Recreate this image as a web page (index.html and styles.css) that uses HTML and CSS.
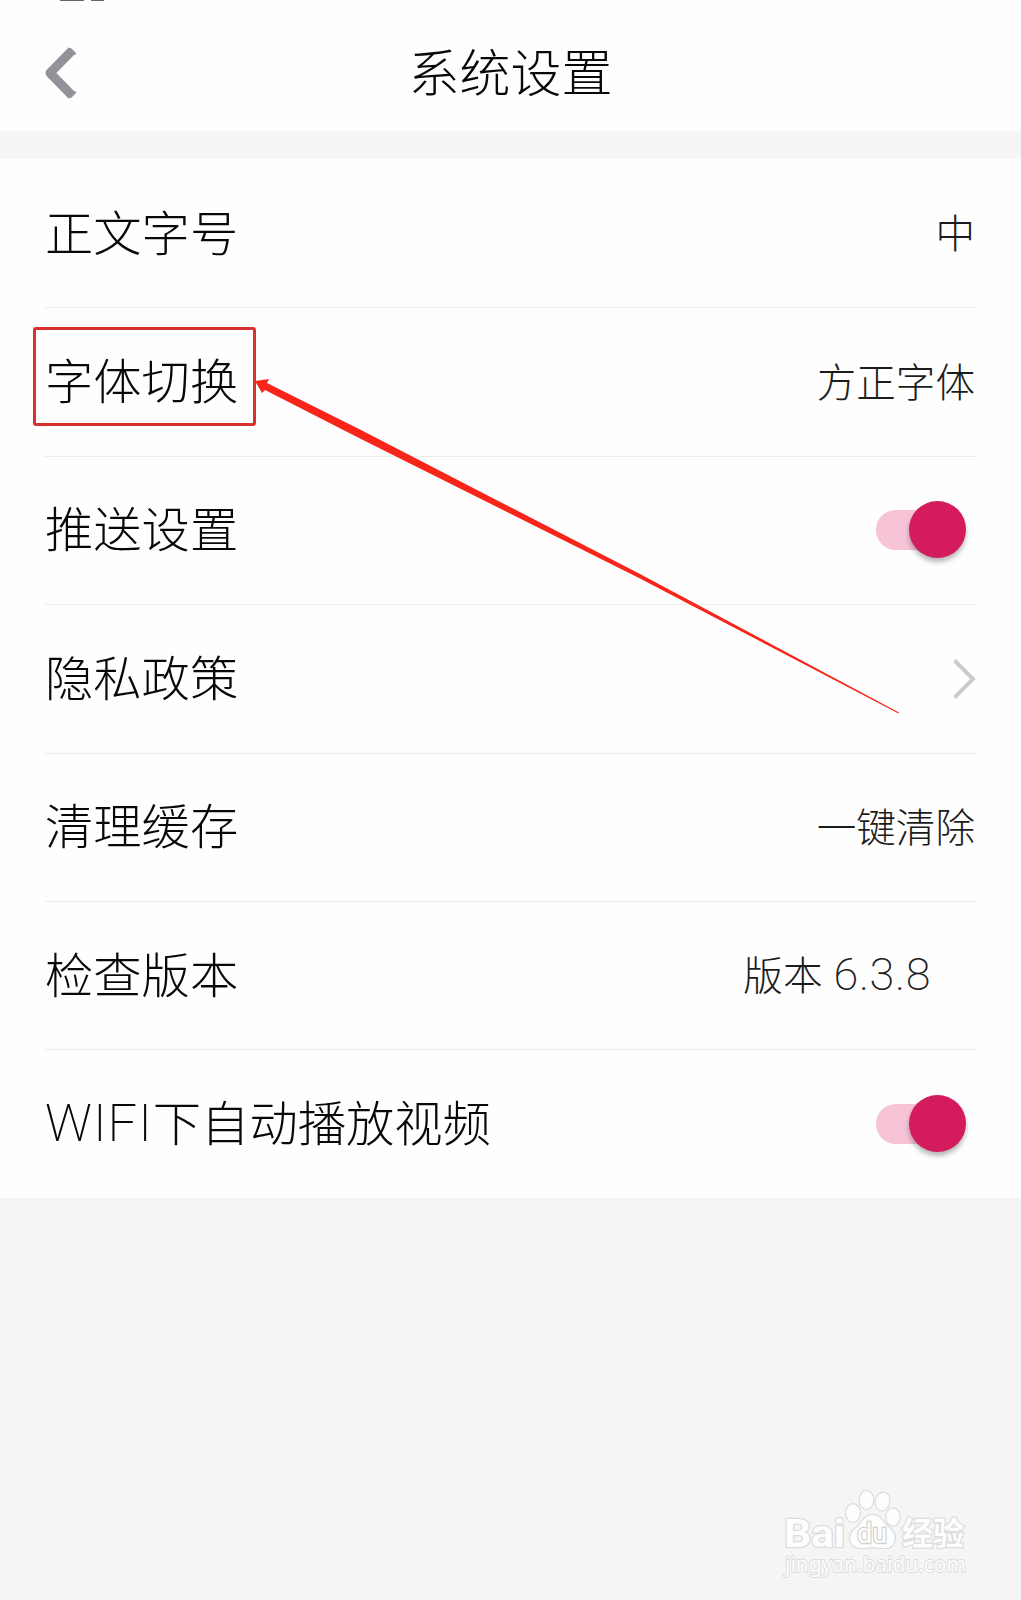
FILE: index.html
```html
<!DOCTYPE html>
<html lang="zh-CN">
<head>
<meta charset="utf-8">
<title>系统设置</title>
<link rel="stylesheet" href="styles.css">
</head>
<body>
<div class="screen">
  <div class="status"><i class="status-a"></i><i class="status-b"></i></div>
  <header class="header">
    <svg class="back" width="34" height="54" viewBox="0 0 34 54" fill="none" stroke="#919398" stroke-width="9" stroke-linejoin="round"><path d="M29 4.500 7 27 29 49.500" /><path stroke-width="3" d="M27.500 3.500 31.500 7.500M27.500 50.500 31.500 46.500" stroke-linecap="round"/></svg>
    <h1 class="title">系统设置</h1>
  </header>
  <main class="list">
    <div class="row"><span class="label">正文字号</span><span class="value">中</span></div>
    <div class="row"><span class="label marked">字体切换</span><span class="value">方正字体</span></div>
    <div class="row"><span class="label">推送设置</span><span class="switch"><i class="knob"></i></span></div>
    <div class="row"><span class="label">隐私政策</span>
      <svg class="chevron" width="23" height="40" viewBox="0 0 23 40" fill="none" stroke="#cbcbcb" stroke-width="4"><path d="M1.500 1.500 20 20 1.500 38.500"/></svg>
    </div>
    <div class="row"><span class="label">清理缓存</span><span class="value">一键清除</span></div>
    <div class="row"><span class="label">检查版本</span><span class="value version">版本<span class="digits">6.3.8</span></span></div>
    <div class="row"><span class="label"><span class="latin">WIFI</span>下自动播放视频</span><span class="switch"><i class="knob"></i></span></div>
  </main>
  <svg class="arrow" width="646" height="335" viewBox="254 379 646 335"><path fill="#f8261a" d="M255 381 269 379 267 383 360 429.500 640 574 899 712.500 898.500 713.500 640 578.500 360 438.500 265 390 262 393Z"/></svg>
  <svg class="watermark" width="190" height="94" viewBox="780 1486 190 94">
    <g fill="#fdfdfd" stroke="#dcdcdc" stroke-width="2.400" paint-order="stroke">
      <ellipse cx="853" cy="1513" rx="6.800" ry="8.700"/>
      <ellipse cx="866.500" cy="1500" rx="6.800" ry="8.900"/>
      <ellipse cx="882.500" cy="1501.500" rx="6.800" ry="8.900" transform="rotate(12 882.500 1501.500)"/>
      <ellipse cx="893" cy="1517" rx="6.700" ry="8.500"/>
      <path d="M873 1515c-9 0-11 8-17 13-5 4-7 9-5 14 3 8 12 6 22 5 10 1 18 3 21-5 2-5 0-10-5-14-6-5-8-13-16-13Z"/>
      <text class="wm-baidu" x="784" y="1547" textLength="61" lengthAdjust="spacingAndGlyphs">Bai</text>
      <text class="wm-du" x="857" y="1543" textLength="30" lengthAdjust="spacingAndGlyphs">du</text>
      <text class="wm-cn" x="902" y="1545" textLength="62" lengthAdjust="spacingAndGlyphs">经验</text>
      <text class="wm-url" x="785" y="1571.500" textLength="181" lengthAdjust="spacingAndGlyphs">jingyan.baidu.com</text>
    </g>
  </svg>
</div>
</body>
</html>
```
FILE: styles.css
```css
* { box-sizing: border-box; }
body {
  margin: 0;
  background: #f5f5f5;
  font-family: "Noto Sans CJK SC", "Noto Sans", sans-serif;
  font-weight: 300;
  color: #080808;
}
.screen { position: relative; height: 1600px; overflow: hidden; }
.status {
  height: 14px;
  padding-left: 60px;
  display: flex;
  gap: 7px;
  background: #fefefe;
}
.status i { height: 1px; background: #666; }
.status-a { width: 24px; }
.status-b { width: 13px; }
.header {
  display: grid;
  grid-template-columns: 120px 1fr 120px;
  align-items: center;
  height: 117px;
  background: #fefefe;
}
.back { margin-left: 43px; }
.title {
  margin: 0;
  padding-bottom: 5px;
  text-align: center;
  font-size: 51px;
  font-weight: 300;
  line-height: 60px;
}
.list { margin-top: 28px; padding-top: 1px; background: #fefefe; }
.row {
  display: flex;
  align-items: center;
  justify-content: space-between;
  height: 148.4px;
  margin: 0 45px;
  border-bottom: 1px solid #ededed;
}
.row:last-child { height: 148px; border-bottom: 0; }
.label {
  position: relative;
  padding-bottom: 8px;
  font-size: 48.3px;
  line-height: 60px;
  white-space: nowrap;
}
.marked::after {
  content: "";
  position: absolute;
  box-sizing: border-box;
  left: -12px;
  top: -21px;
  width: 223px;
  height: 99px;
  border: 3px solid #d93030;
  border-radius: 3px;
}
.value {
  margin-right: 1px;
  padding-bottom: 5px;
  font-size: 39.6px;
  line-height: 50px;
  color: #1c1c1c;
}
.version { margin-right: 45px; }
.latin {
  font-family: Roboto, sans-serif;
  font-size: 52px;
  font-weight: 200;
  line-height: 1;
  letter-spacing: 1px;
}
.digits {
  margin-left: 11px;
  font-family: Roboto, sans-serif;
  font-size: 45px;
  font-weight: 200;
  line-height: 1;
  letter-spacing: .6px;
}
.switch {
  position: relative;
  width: 80px;
  height: 40px;
  margin-right: 20px;
  border-radius: 20px;
  background: #f6c3d7;
}
.knob {
  position: absolute;
  left: 33px;
  top: -9px;
  width: 57px;
  height: 57px;
  border-radius: 50%;
  background: #d31b5d;
  box-shadow: 0 4px 5px rgba(0, 0, 0, .28);
}
.arrow { position: absolute; left: 254px; top: 379px; }
.watermark { position: absolute; left: 780px; top: 1486px; }
.wm-baidu { font: 700 39px Roboto, sans-serif; }
.wm-du { font: 400 28px Roboto, sans-serif; stroke: #d0d0d0; }
.wm-cn { font: 700 32px "Noto Sans CJK SC", sans-serif; }
.wm-url { font: 400 21px "Noto Sans", sans-serif; stroke-width: 1.800px; }
```
